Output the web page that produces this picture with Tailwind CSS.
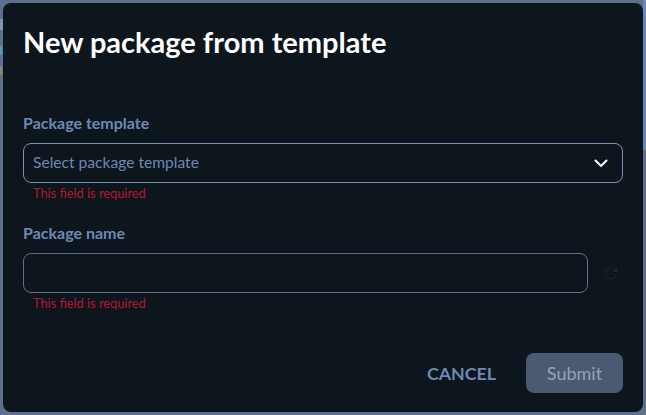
<!DOCTYPE html>
<html>
<head>
<meta charset="utf-8">
<script src="https://cdn.jsdelivr.net/npm/@tailwindcss/browser@4"></script>
</head>
<body class="m-0 h-[415px] w-[646px] overflow-hidden bg-[#5d6f8c] font-['Lato','Noto_Sans',sans-serif]">
<div class="relative flex h-[415px] w-[646px] p-[3px]">
  <div class="absolute right-0 top-0 h-[150px] w-[3px] bg-[#6489bb]"></div>
  <div class="absolute left-0 top-[19px] h-[11px] w-[3px] bg-[#8296ad]"></div>
  <div class="absolute left-0 top-[46px] h-[9px] w-[2px] bg-[#4f9ab8]"></div>
  <div class="absolute left-0 top-[66px] h-[9px] w-[2px] bg-[#93866f]"></div>
  <div class="flex h-[409px] w-[640px] flex-col rounded-[8px] bg-[#0d151d] px-5 pt-[20px]">
    <h2 class="h-[38px] text-[29px] leading-[38px] font-bold text-white">New package from template</h2>
    <label class="mt-[52px] h-[20px] text-[16px] leading-[20px] font-bold text-[#6c8ab5]">Package template</label>
    <div class="mt-[10px] flex h-10 w-[600px] items-center justify-between rounded-[8px] border border-[#7d92b0] pr-[14px] pl-[9px]">
      <span class="text-[15.6px] text-[#6c8ab5]">Select package template</span>
      <svg width="14" height="9" viewBox="0 0 14 9" fill="none"><path d="M1.5 1.5 7 7l5.5-5.5" stroke="#fff" stroke-width="2" stroke-linecap="round" stroke-linejoin="round"/></svg>
    </div>
    <p class="mt-[1px] h-[18px] pl-[10px] text-[12.8px] leading-[18px] text-[#b8152e]">This field is required</p>
    <label class="mt-[21px] h-[20px] text-[16px] leading-[20px] font-bold text-[#6c8ab5]">Package name</label>
    <div class="mt-[10px] flex items-center">
      <div class="h-10 w-[565px] rounded-[8px] border border-[#5f7089]"></div>
      <svg class="ml-[16px]" width="14" height="14" viewBox="0 0 14 14" fill="none"><path d="M11.6 4.5A5.4 5.4 0 1 0 12.4 8" stroke="#232b35" stroke-width="1.3" stroke-dasharray="1.3 1"/><path d="M12.6 1.5v3.6H9" stroke="#232b35" stroke-width="1.1"/></svg>
    </div>
    <p class="mt-[1px] h-[18px] pl-[10px] text-[12.8px] leading-[18px] text-[#b8152e]">This field is required</p>
    <div class="mt-[41px] flex items-center justify-end">
      <button class="mr-[30px] text-[17.8px] font-bold text-[#6c8ab5]">CANCEL</button>
      <button class="h-10 w-[97px] rounded-[8px] bg-[#4a5a70] text-[18px] text-[#97a2b1]">Submit</button>
    </div>
  </div>
</div>
</body>
</html>
